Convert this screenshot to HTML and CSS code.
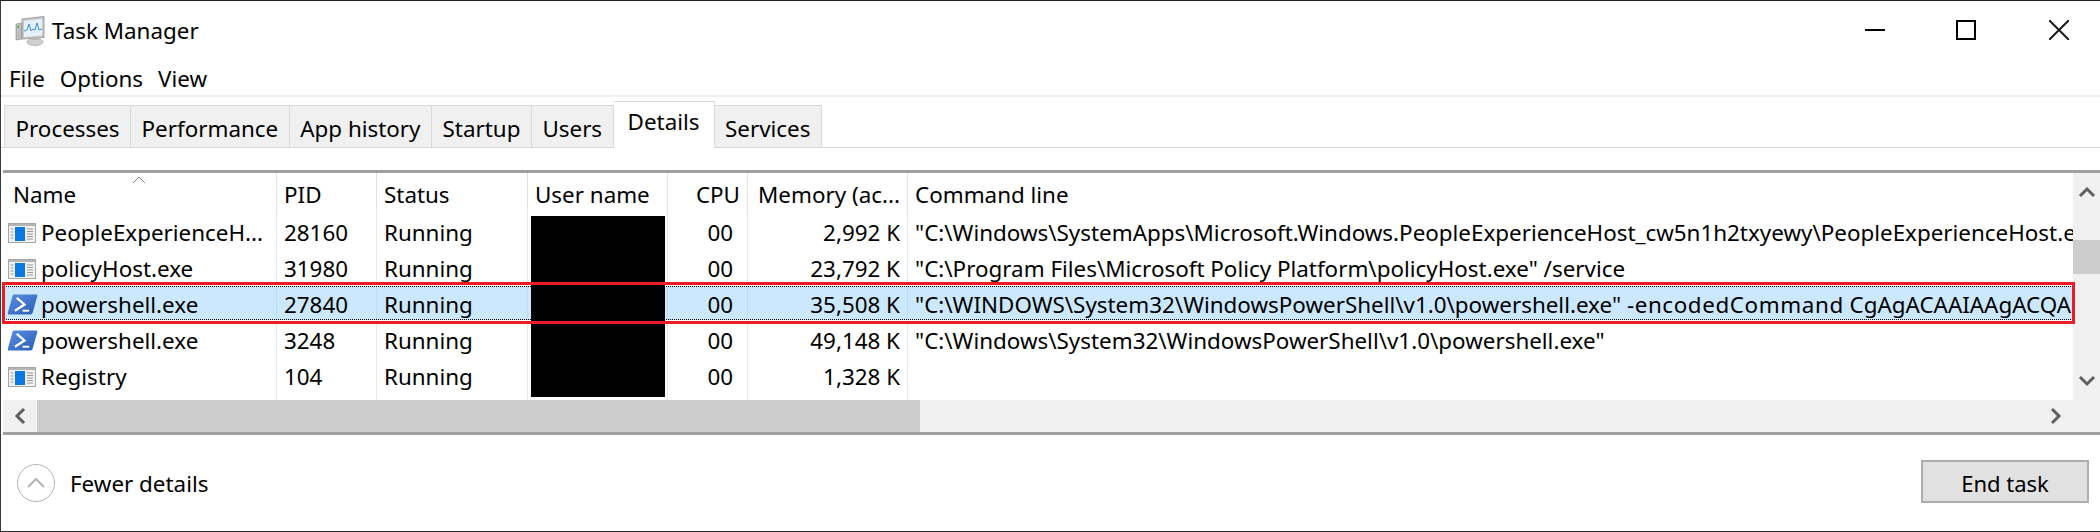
FILE: index.html
```html
<!DOCTYPE html>
<html lang="en">
  <head>
    <meta charset="UTF-8" />
    <title>Task Manager</title>
    <link rel="stylesheet" href="styles.css">
  </head>
  <body>
    <svg class="defs" width="0" height="0">
      <defs>
        <linearGradient id="ps-blue" x1="0" y1="0" x2="1" y2="1">
          <stop offset="0" stop-color="#5b8fe3" />
          <stop offset="1" stop-color="#2a5db5" />
        </linearGradient>
        <symbol id="app-icon" viewBox="0 0 28 20">
          <rect x="0.5" y="0.5" width="27" height="19" fill="#f2f2f2" stroke="#a6a6a6" />
          <rect x="1" y="1" width="26" height="2" fill="#b5b5b5" />
          <rect x="7" y="4" width="10" height="14" fill="#0a78dc" />
          <path d="M2.5 6h3M2.5 9h3M2.5 12h3M2.5 15h3M19 6h6M19 8.5h6M19 11h6M19 13.5h6M19 16h6" stroke="#9a9a9a" stroke-width="1" />
        </symbol>
        <symbol id="ps-icon" viewBox="0 0 31 22">
          <path d="M6 0.5h23.5q1.500 0 1 1.500l-5 18q-.5 1.500-2 1.500h-23q-1.500 0-1-1.500l5-18q.5-1.500 1.500-1.500z" fill="url(#ps-blue)" />
          <path d="M9 4l8 7-10 6.500" fill="none" stroke="#fff" stroke-width="2.400" />
          <path d="M15 17.500h7" stroke="#fff" stroke-width="2" />
        </symbol>
      </defs>
    </svg>

    <div class="window">
      <div class="title-bar">
        <svg class="tm-icon" width="32" height="30" viewBox="0 0 32 30">
          <path d="M1 8l6-1v16l-6 1z" fill="#bdbdbd" stroke="#8c8c8c" stroke-width="0.600" />
          <rect x="2" y="10" width="2" height="2" fill="#5fbf4a" />
          <path d="M7 3l22-2.500v21l-22 1.500z" fill="#c9c9c9" stroke="#8f8f8f" stroke-width="0.800" />
          <path d="M9 5l18-2v16.500l-18 1.500z" fill="#e4f1fb" />
          <path d="M9 15l3-1 2-6 2 7 2-2 2 1 2-7 2 7 3-1" fill="none" stroke="#3c8fd8" stroke-width="1" />
          <ellipse cx="20" cy="26" rx="8" ry="3.500" fill="#d0d0d0" stroke="#999" stroke-width="0.600" />
          <rect x="17" y="21" width="6" height="3" fill="#b5b5b5" />
        </svg>
        <span class="title-text">Task Manager</span>
        <div class="win-controls">
          <svg width="20" height="20" viewBox="0 0 20 20"><path d="M0 10h20" stroke="#000" stroke-width="2" /></svg>
          <svg width="20" height="20" viewBox="0 0 20 20"><rect x="1" y="1" width="18" height="18" fill="none" stroke="#000" stroke-width="2" /></svg>
          <svg width="20" height="20" viewBox="0 0 20 20"><path d="M0 0l20 20M20 0l-20 20" stroke="#1a1a1a" stroke-width="2" /></svg>
        </div>
      </div>

      <div class="menu-bar">
        <span>File</span>
        <span>Options</span>
        <span>View</span>
      </div>

      <div class="tabs">
        <div class="tab">Processes</div>
        <div class="tab">Performance</div>
        <div class="tab">App history</div>
        <div class="tab">Startup</div>
        <div class="tab">Users</div>
        <div class="tab active">Details</div>
        <div class="tab">Services</div>
      </div>

      <div class="list-wrap">
        <div class="list">
          <div class="row head">
            <div class="cell name-head">Name
              <svg class="sort" width="14" height="8" viewBox="0 0 14 8"><path d="M1 7l6-6 6 6" fill="none" stroke="#8a8a8a" stroke-width="1" /></svg>
            </div>
            <div class="cell">PID</div>
            <div class="cell">Status</div>
            <div class="cell">User name</div>
            <div class="cell right">CPU</div>
            <div class="cell right">Memory (ac...</div>
            <div class="cell">Command line</div>
          </div>

          <div class="row">
            <div class="cell name"><svg class="icon" width="28" height="20"><use href="#app-icon" /></svg>PeopleExperienceH...</div>
            <div class="cell">28160</div>
            <div class="cell">Running</div>
            <div class="cell"></div>
            <div class="cell right cpu">00</div>
            <div class="cell right">2,992 K</div>
            <div class="cell">"C:\Windows\SystemApps\Microsoft.Windows.PeopleExperienceHost_cw5n1h2txyewy\PeopleExperienceHost.exe"</div>
          </div>
          <div class="row">
            <div class="cell name"><svg class="icon" width="28" height="20"><use href="#app-icon" /></svg>policyHost.exe</div>
            <div class="cell">31980</div>
            <div class="cell">Running</div>
            <div class="cell"></div>
            <div class="cell right cpu">00</div>
            <div class="cell right">23,792 K</div>
            <div class="cell">"C:\Program Files\Microsoft Policy Platform\policyHost.exe" /service</div>
          </div>
          <div class="row selected">
            <div class="cell name"><svg class="icon ps" width="30" height="21"><use href="#ps-icon" /></svg>powershell.exe</div>
            <div class="cell">27840</div>
            <div class="cell">Running</div>
            <div class="cell"></div>
            <div class="cell right cpu">00</div>
            <div class="cell right">35,508 K</div>
            <div class="cell"><span>"C:\WINDOWS\System32\WindowsPowerShell\v1.0\powershell.exe" <span class="flag">-encodedCommand</span> CgAgACAAIAAgACQA</span></div>
          </div>
          <div class="row">
            <div class="cell name"><svg class="icon ps" width="30" height="21"><use href="#ps-icon" /></svg>powershell.exe</div>
            <div class="cell">3248</div>
            <div class="cell">Running</div>
            <div class="cell"></div>
            <div class="cell right cpu">00</div>
            <div class="cell right">49,148 K</div>
            <div class="cell">"C:\Windows\System32\WindowsPowerShell\v1.0\powershell.exe"</div>
          </div>
          <div class="row">
            <div class="cell name"><svg class="icon" width="28" height="20"><use href="#app-icon" /></svg>Registry</div>
            <div class="cell">104</div>
            <div class="cell">Running</div>
            <div class="cell"></div>
            <div class="cell right cpu">00</div>
            <div class="cell right">1,328 K</div>
            <div class="cell"></div>
          </div>
          <div class="row filler">
            <div class="cell"></div><div class="cell"></div><div class="cell"></div><div class="cell"></div>
            <div class="cell"></div><div class="cell"></div><div class="cell"></div>
          </div>
        </div>

        <div class="vscroll">
          <div class="vs-btn"><svg width="18" height="12" viewBox="0 0 18 12"><path d="M2 10l7-7 7 7" fill="none" stroke="#606060" stroke-width="3" /></svg></div>
          <div class="vs-gap"></div>
          <div class="vs-thumb"></div>
          <div class="vs-track"></div>
          <div class="vs-btn"><svg width="18" height="12" viewBox="0 0 18 12"><path d="M2 2l7 7 7-7" fill="none" stroke="#606060" stroke-width="3" /></svg></div>
        </div>
      </div>

      <div class="hscroll">
        <div class="hs-btn"><svg width="12" height="18" viewBox="0 0 12 18"><path d="M10 2l-7 7 7 7" fill="none" stroke="#606060" stroke-width="3" /></svg></div>
        <div class="hs-thumb"></div>
        <div class="hs-track"></div>
        <div class="hs-btn"><svg width="12" height="18" viewBox="0 0 12 18"><path d="M2 2l7 7-7 7" fill="none" stroke="#606060" stroke-width="3" /></svg></div>
        <div class="hs-corner"></div>
      </div>

      <div class="footer">
        <div class="fewer">
          <svg width="38" height="38" viewBox="0 0 38 38">
            <circle cx="19" cy="19" r="18.500" fill="#fff" stroke="#b4b4b4" />
            <path d="M11 23l8-8 8 8" fill="none" stroke="#b4b4b4" stroke-width="2" />
          </svg>
          <span>Fewer details</span>
        </div>
        <button class="end-task">End task</button>
      </div>

      <div class="redacted"></div>
      <div class="callout"></div>
    </div>
  </body>
</html>
```

FILE: styles.css
```css
* {
  margin: 0;
  padding: 0;
  box-sizing: border-box;
  font-family: "Noto Sans", sans-serif;
}

body {
  background: #fff;
  color: #000;
  font-size: 22.4px;
}

.defs {
  display: block;
}

.window {
  position: relative;
  height: 532px;
  display: flex;
  flex-direction: column;
  background: #fff;
  border-top: 1px solid #1f1f1f;
  border-left: 1px solid #3a3a3a;
  border-bottom: 1px solid #2a2a2a;
  overflow: hidden;
}

.title-bar {
  height: 59px;
  display: flex;
  align-items: center;
  padding-left: 14px;
  padding-right: 31px;
}

.tm-icon {
  margin-right: 5px;
}

.title-text {
  font-size: 22.4px;
}

.win-controls {
  margin-left: auto;
  display: flex;
  gap: 71px;
  margin-top: -2px;
}

.win-controls svg:last-child {
  margin-left: 2px;
}

.menu-bar {
  height: 35px;
  display: flex;
  align-items: center;
  gap: 15px;
  padding-left: 8px;
  padding-top: 2px;
}

.tabs {
  height: 53px;
  border-top: 2px solid #f0f0f0;
  display: flex;
  align-items: flex-end;
  padding-left: 3px;
  border-bottom: 1px solid #d9d9d9;
  flex-shrink: 0;
}

.tab {
  height: 43px;
  margin-bottom: -1px;
  padding: 4px 10.5px 0;
  display: flex;
  align-items: center;
  background: #f0f0f0;
  border: 1px solid #d9d9d9;
  border-left: 0;
  border-bottom: 1px solid #d9d9d9;
}

.tab:first-child {
  border-left: 1px solid #d9d9d9;
}

.tab.active {
  height: 47px;
  background: #fff;
  border-bottom: 1px solid #fff;
  padding: 0 14px 6px;
}

.list-wrap {
  margin-top: 22px;
  margin-left: 2px;
  height: 230px;
  display: flex;
  border-top: 3px solid #a0a0a0;
  flex-shrink: 0;
}

.list {
  width: 2070px;
  flex-shrink: 0;
  overflow: hidden;
}

.row {
  display: grid;
  grid-template-columns: 274px 100px 151px 140px 80px 160px 1fr;
  height: 36px;
}

.row.head {
  height: 41px;
}

.row.filler {
  height: 6px;
}

.row.selected {
  height: 34px;
  margin-bottom: 2px;
  background: #cce8ff;
  outline: 1px dotted #000;
  outline-offset: -1px;
}

.cell {
  display: flex;
  align-items: center;
  padding-left: 7px;
  padding-top: 1px;
  white-space: nowrap;
  overflow: hidden;
  border-right: 1px solid #dfeaf7;
}

.row.head .cell {
  padding-top: 2px;
  border-right-color: #e5e5e5;
}

.row.selected .cell {
  padding-top: 3px;
  border-right-color: #bcdcf4;
}

.cell:last-child {
  border-right: 0;
}

.cell.right {
  justify-content: flex-end;
  padding-left: 0;
  padding-right: 7px;
}

.cell.cpu {
  padding-right: 14px;
}

.name-head {
  position: relative;
  padding-left: 10px !important;
}

.sort {
  position: absolute;
  left: 129px;
  top: 3px;
}

.cell.name {
  padding-left: 5px;
}

.icon {
  flex-shrink: 0;
  margin-right: 5px;
}

.icon.ps {
  margin-right: 3px;
}

.flag {
  letter-spacing: 0.6px;
}

.vscroll {
  flex: 1;
  display: flex;
  flex-direction: column;
  background: #f0f0f0;
}

.vs-btn {
  height: 38px;
  display: flex;
  align-items: center;
  justify-content: center;
}

.vs-gap {
  height: 29px;
}

.vs-thumb {
  height: 34px;
  background: #cdcdcd;
}

.vs-track {
  flex: 1;
}

.hscroll {
  margin-left: 2px;
  height: 32px;
  display: flex;
  background: #f0f0f0;
  flex-shrink: 0;
}

.hs-btn {
  width: 34px;
  display: flex;
  align-items: center;
  justify-content: center;
}

.hs-thumb {
  width: 883px;
  background: #cdcdcd;
}

.hs-track {
  flex: 1;
}

.hs-corner {
  width: 27px;
}

.footer {
  flex: 1;
  margin-left: 2px;
  border-top: 3px solid #a0a0a0;
  display: flex;
  align-items: center;
  justify-content: space-between;
  padding: 0 11px 0 14px;
}

.fewer {
  display: flex;
  align-items: center;
  gap: 15px;
}

.end-task {
  width: 168px;
  height: 43px;
  padding-top: 2px;
  background: #e1e1e1;
  border: 2px solid #adadad;
  font-size: 22px;
  color: #000;
  margin-bottom: 3px;
}

.redacted {
  position: absolute;
  left: 530px;
  top: 215px;
  width: 134px;
  height: 181px;
  background: #000;
}

.callout {
  position: absolute;
  left: 1px;
  top: 281px;
  width: 2073px;
  height: 42px;
  border: 3px solid #ed1c24;
}
```
